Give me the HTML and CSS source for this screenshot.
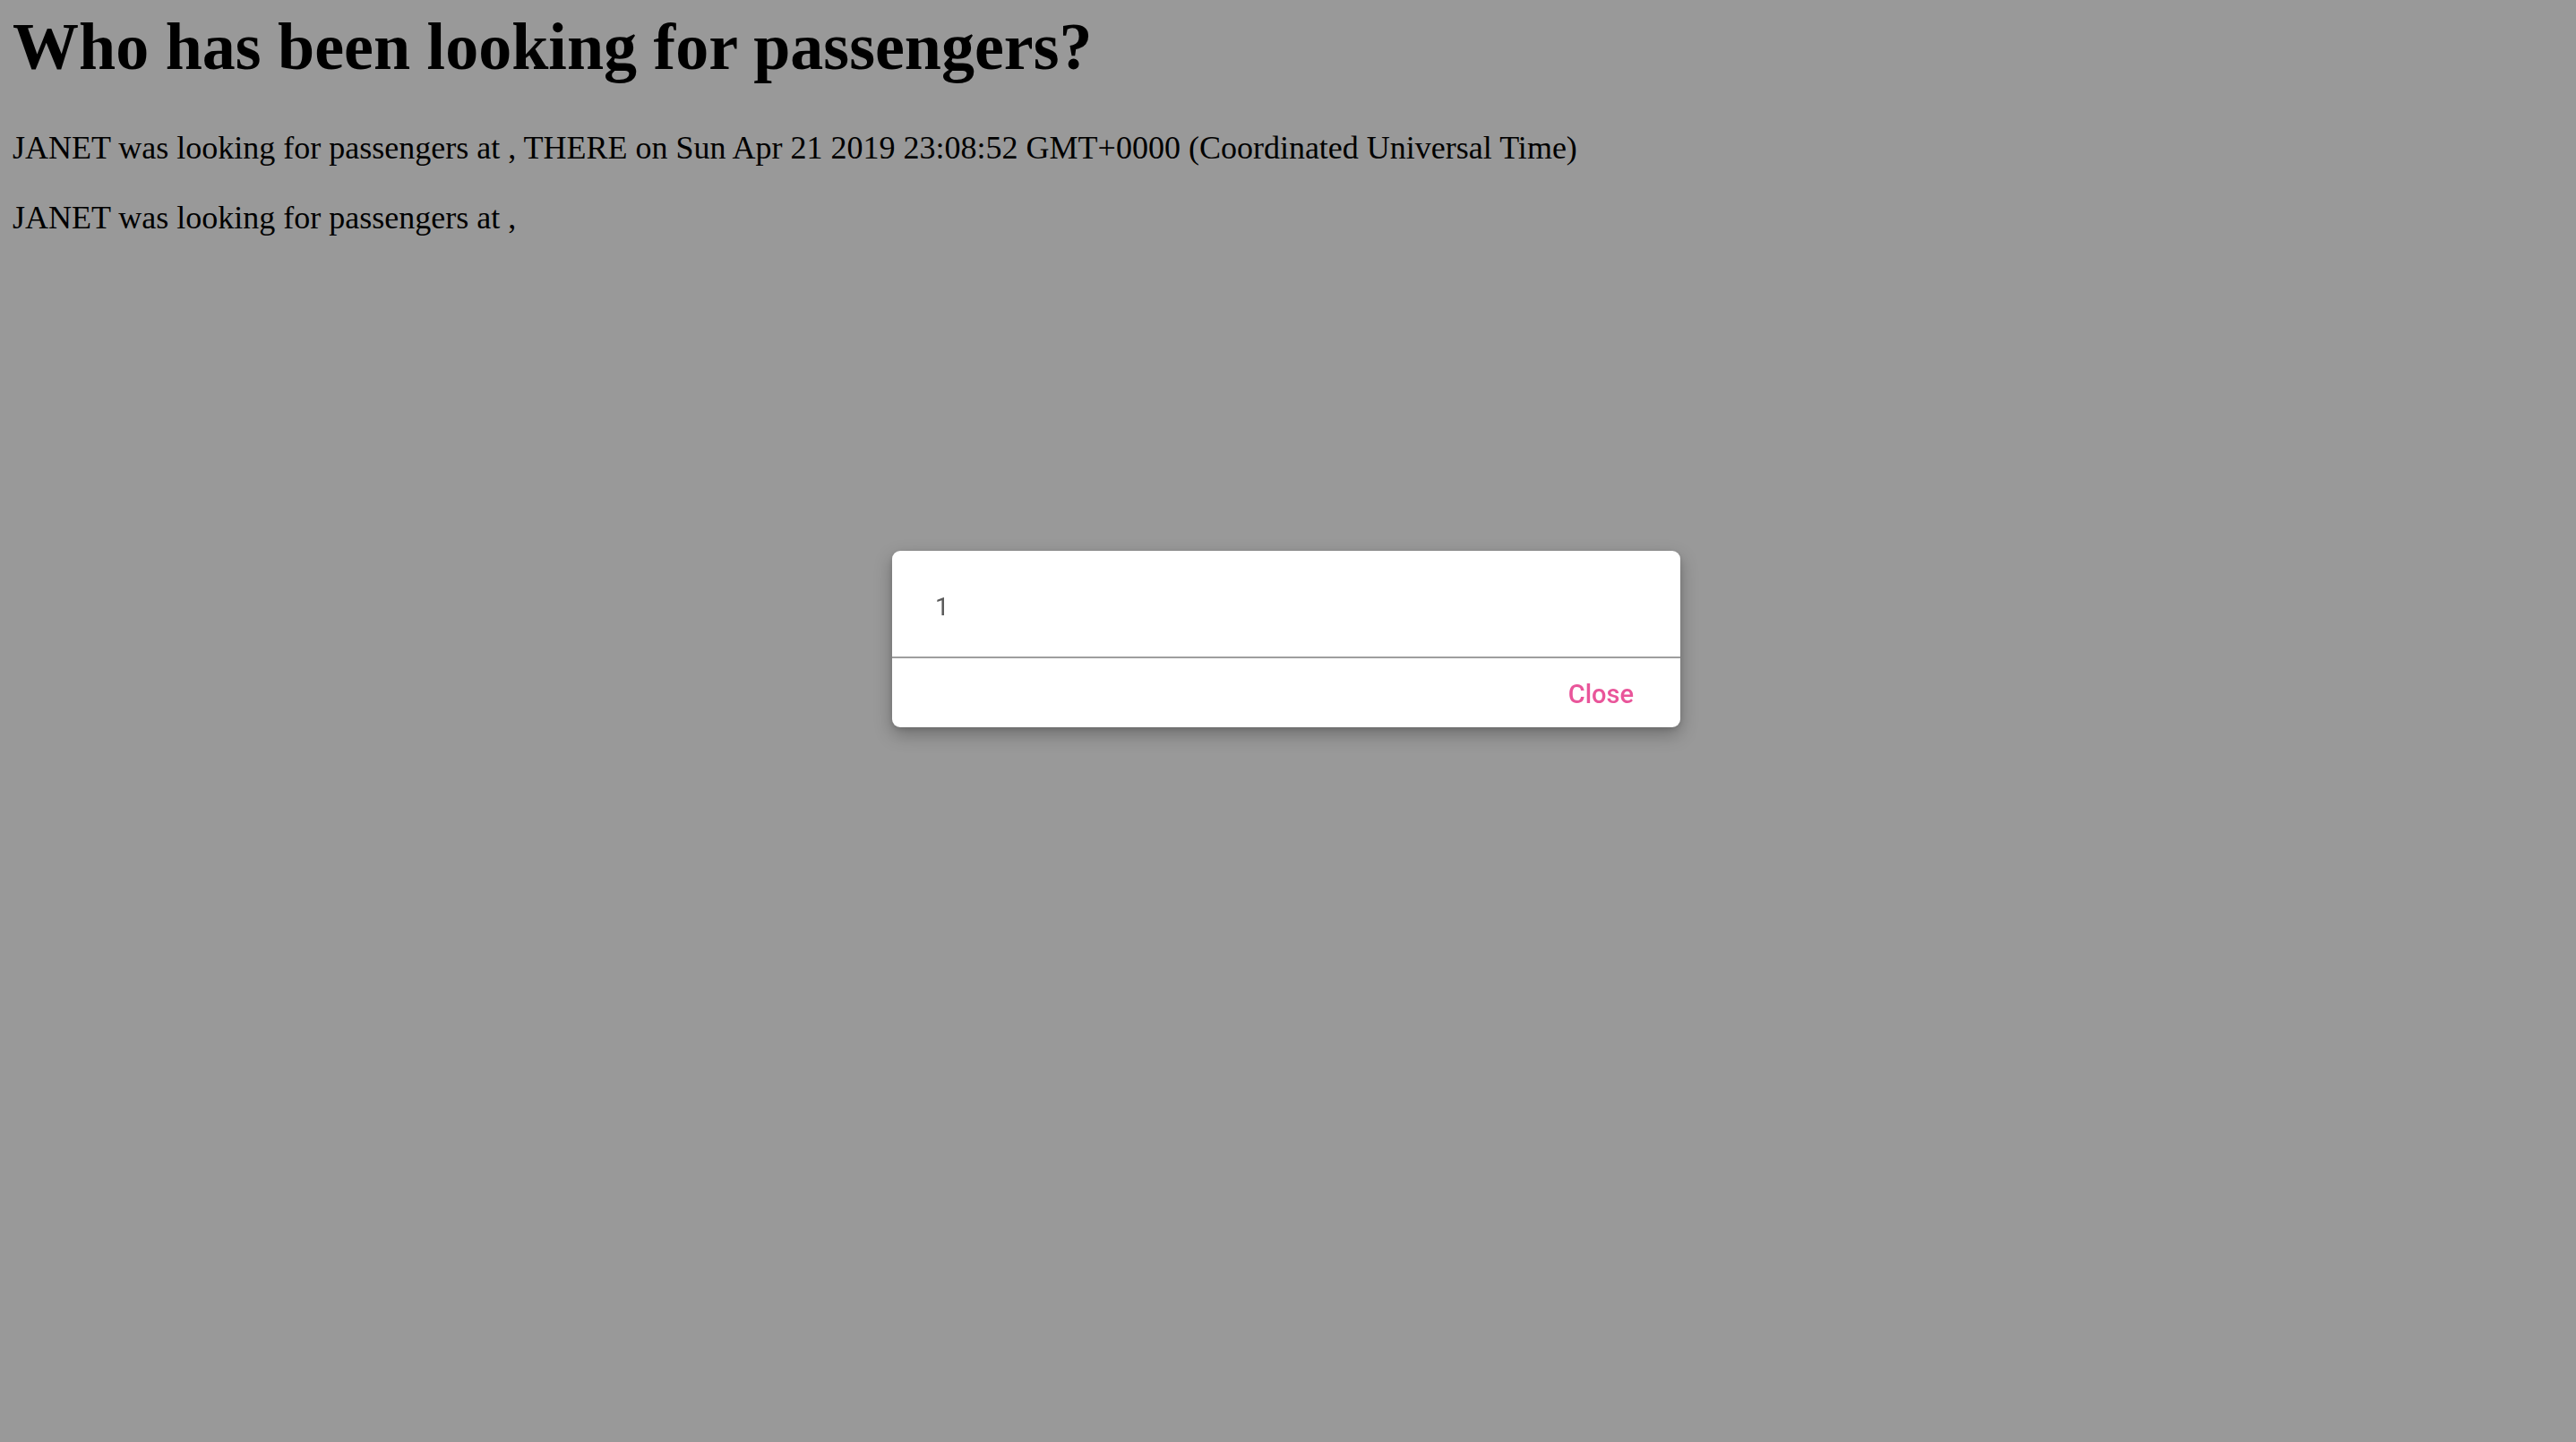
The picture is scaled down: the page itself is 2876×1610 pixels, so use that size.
FILE: index.html
```html
<!DOCTYPE html>
<html lang="en">
<head>
<meta charset="utf-8">
<title>Who has been looking for passengers?</title>
<link rel="stylesheet" href="styles.css">
</head>
<body>
<main class="page">
  <h1 class="title">Who has been looking for passengers?</h1>
  <p class="entry">JANET was looking for passengers at , THERE on Sun Apr 21 2019 23:08:52 GMT+0000 (Coordinated Universal Time)</p>
  <p class="entry">JANET was looking for passengers at ,</p>
</main>
<div class="backdrop">
  <div class="dialog" role="dialog">
    <div class="dialog-content">1</div>
    <div class="dialog-actions">
      <button class="btn-close" type="button">Close</button>
    </div>
  </div>
</div>
</body>
</html>
```

FILE: styles.css
```css
html, body {
  margin: 0;
  padding: 0;
  height: 100%;
}
body {
  background: #999999;
  color: #000;
  font-family: "Liberation Serif", "Times New Roman", serif;
}
.page {
  padding: 15px 0 0 14px;
}
.title {
  margin: 0 0 58px 0;
  font-size: 74px;
  line-height: 74px;
  font-weight: bold;
}
.entry {
  margin: 0 0 42px 0;
  font-size: 36px;
  line-height: 36px;
}
.backdrop {
  position: fixed;
  inset: 0;
  display: flex;
  justify-content: center;
  align-items: flex-start;
  padding: 615px 4px 0 0;
  box-sizing: border-box;
}
.dialog {
  width: 880px;
  height: 197px;
  background: #fff;
  border-radius: 9px;
  box-shadow: 0 8px 20px rgba(0,0,0,0.28), 0 2px 6px rgba(0,0,0,0.12);
  display: flex;
  flex-direction: column;
  overflow: hidden;
  font-family: Roboto, "Noto Sans", sans-serif;
}
.dialog-content {
  padding: 46px 48px 39px 48px;
  font-size: 28px;
  line-height: 33px;
  color: #5a5a5a;
  border-bottom: 2px solid #9e9e9e;
}
.dialog-actions {
  display: flex;
  justify-content: flex-end;
  padding: 24px 52px 0 0;
}
.btn-close {
  border: 0;
  background: transparent;
  padding: 0;
  font-family: Roboto, "Noto Sans", sans-serif;
  font-size: 29px;
  line-height: 33px;
  font-weight: 500;
  color: #e9559a;
  cursor: pointer;
}
```
